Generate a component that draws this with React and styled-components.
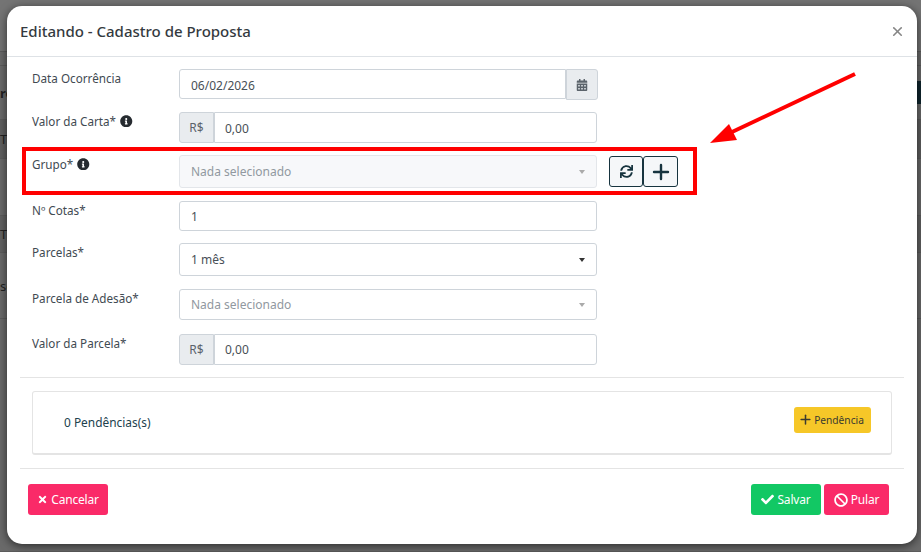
import React from 'react';
import styled, { createGlobalStyle } from 'styled-components';
import { FaBan, FaCalendarAlt, FaCheck, FaInfoCircle, FaSync, FaTimes } from 'react-icons/fa';
import { Plus, X } from 'lucide-react';

const GlobalStyle = createGlobalStyle`
    html, body {
        margin: 0;
        padding: 0;
        width: 921px;
        height: 552px;
        overflow: hidden;
        font-family: "Noto Sans", "Open Sans", sans-serif;
    }
    * {
        box-sizing: border-box;
    }
`;

const Page = styled.div`
    position: relative;
    width: 921px;
    height: 552px;
    overflow: hidden;
    background: #666;
    display: flex;
    flex-direction: column;
`;

const PageRow = styled.div`
    height: ${(p) => p.$h}px;
    background: ${(p) => p.$bg || '#6a6a6a'};
    border-bottom: 1px solid #5c5c5c;
    display: flex;
    align-items: center;
    justify-content: space-between;
    font-size: 13px;
    font-weight: ${(p) => (p.$bold ? 700 : 400)};
    color: #222;
    white-space: pre;
`;

const DarkEnd = styled.div`
    width: 10px;
    height: 23px;
    background: #10262e;
`;

const Modal = styled.div`
    position: absolute;
    left: 7px;
    top: 6px;
    width: 910px;
    height: 538px;
    background: #fff;
    border-radius: 15px;
    box-shadow: 0 2px 10px rgba(0, 0, 0, .6);
    display: flex;
    flex-direction: column;
    color: #3e4b55;
`;

const Header = styled.div`
    height: 51px;
    padding: 0 12px 0 13px;
    border-bottom: 1px solid #dee2e6;
    display: flex;
    align-items: center;
    justify-content: space-between;
`;

const Title = styled.h5`
    margin: 0;
    font-size: 15px;
    font-weight: 500;
    color: #343a40;
`;

const Close = styled.span`
    display: flex;
    color: #858585;
`;

const Body = styled.div`
    padding: 12px 25px 0;
`;

const Row = styled.div`
    height: ${(p) => p.$pitch}px;
    display: flex;
    align-items: flex-start;
`;

const Label = styled.label`
    width: 147px;
    font-size: 11.7px;
    line-height: 18px;
    display: flex;
    align-items: center;
    gap: 4px;
    color: #3f4a52;
    svg {
        font-size: 12.5px;
        color: #262b30;
    }
`;

const Field = styled.div`
    width: ${(p) => p.$w || 418}px;
    height: ${(p) => p.$h || 30}px;
    display: flex;
    align-items: center;
    justify-content: space-between;
    padding: ${(p) => p.$pt || 0}px 11px 0 ${(p) => p.$pl || 11}px;
    font-size: 12px;
    color: ${(p) => (p.$muted ? '#9198a0' : '#495057')};
    background: ${(p) => (p.$disabled ? '#f7f8fa' : '#fff')};
    border: 1px solid ${(p) => (p.$disabled ? '#e3e6ea' : '#ced4da')};
    border-radius: ${(p) => p.$radius || '3px'};
`;

const InputGroup = styled.div`
    display: flex;
`;

const Addon = styled.div`
    height: 31px;
    width: ${(p) => p.$w}px;
    display: flex;
    align-items: center;
    justify-content: center;
    font-size: 12px;
    color: #5b636b;
    background: #e9ecef;
    border: 1px solid #ced4da;
    border-radius: ${(p) => p.$radius};
`;

const Caret = styled.span`
    width: 0;
    height: 0;
    border-left: 3.5px solid transparent;
    border-right: 3.5px solid transparent;
    border-top: 4px solid ${(p) => p.$color};
`;

const IconButton = styled.button`
    width: ${(p) => p.$w}px;
    height: 31px;
    padding: 0;
    margin: 1px 0 0 ${(p) => p.$ml}px;
    display: flex;
    align-items: center;
    justify-content: center;
    font-size: 13px;
    color: #17343f;
    background: #f5f7f9;
    border: 1px solid #17343f;
    border-radius: 3px;
`;

const Divider = styled.div`
    height: 1px;
    background: #e4e4e4;
    margin: ${(p) => p.$margin};
`;

const Card = styled.div`
    height: 64px;
    margin: 0 25px;
    padding: 0 20px 2px 31px;
    border: 1px solid #e4e4e4;
    border-bottom-width: 2px;
    border-radius: 3px;
    display: flex;
    align-items: center;
    justify-content: space-between;
    font-size: 11.9px;
    color: #21414d;
`;

const Button = styled.button`
    height: 31px;
    width: ${(p) => p.$w}px;
    padding: 0;
    margin: ${(p) => p.$margin || 0};
    display: flex;
    align-items: center;
    justify-content: center;
    gap: 3px;
    font-family: inherit;
    font-size: 12px;
    letter-spacing: -.2px;
    color: #fff;
    background: ${(p) => p.$bg};
    border: 0;
    border-radius: 3px;
`;

const SmallButton = styled.button`
    width: 77px;
    height: 26px;
    padding: 0 3px 0 0;
    margin-bottom: 4px;
    display: flex;
    align-items: center;
    justify-content: center;
    gap: 1px;
    font-family: inherit;
    font-size: 10.2px;
    color: #3a3a30;
    background: #f6c728;
    border: 0;
    border-radius: 3px;
`;

const Footer = styled.div`
    padding: 0 28px 0 21px;
    display: flex;
    align-items: flex-start;
`;

const Spacer = styled.div`
    flex: 1;
`;

const Highlight = styled.div`
    position: absolute;
    left: 22px;
    top: 147px;
    width: 675px;
    height: 48px;
    border: 4px solid #ff0000;
    pointer-events: none;
`;

const Arrow = styled.svg`
    position: absolute;
    left: 700px;
    top: 65px;
`;

export default function App() {
    return (
        <Page>
            <GlobalStyle />
            <PageRow $h={52} $bg="#747474" />
            <PageRow $h={14} />
            <PageRow $h={54} $bold>ro<DarkEnd /></PageRow>
            <PageRow $h={39} $bg="#606060">TT</PageRow>
            <PageRow $h={57} />
            <PageRow $h={37} $bg="#626262">TT</PageRow>
            <PageRow $h={66}>so</PageRow>
            <PageRow $h={233} />

            <Modal>
                <Header>
                    <Title>Editando - Cadastro de Proposta</Title>
                    <Close><X size={15} strokeWidth={2.6} /></Close>
                </Header>
                <Body>
                    <Row $pitch={43}>
                        <Label>Data Ocorrência</Label>
                        <InputGroup>
                            <Field $w={387} $pt={2} $radius="3px 0 0 3px">06/02/2026</Field>
                            <Addon $w={32} $radius="0 3px 3px 0"><FaCalendarAlt /></Addon>
                        </InputGroup>
                    </Row>
                    <Row $pitch={43}>
                        <Label>Valor da Carta* <FaInfoCircle /></Label>
                        <InputGroup>
                            <Addon $w={35} $radius="3px 0 0 3px">R$</Addon>
                            <Field $w={383} $h={31} $pt={1} $pl={10} $radius="0 3px 3px 0">0,00</Field>
                        </InputGroup>
                    </Row>
                    <Row $pitch={46}>
                        <Label>Grupo* <FaInfoCircle /></Label>
                        <Field $h={33} $disabled $muted>Nada selecionado<Caret $color="#aaa" /></Field>
                        <IconButton $w={34} $ml={12}><FaSync /></IconButton>
                        <IconButton $w={35} $ml={0}><Plus size={24} strokeWidth={2.4} /></IconButton>
                    </Row>
                    <Row $pitch={42}>
                        <Label>Nº Cotas*</Label>
                        <Field>1</Field>
                    </Row>
                    <Row $pitch={46}>
                        <Label>Parcelas*</Label>
                        <Field $h={33}>1 mês<Caret $color="#333" /></Field>
                    </Row>
                    <Row $pitch={45}>
                        <Label>Parcela de Adesão*</Label>
                        <Field $h={31} $muted>Nada selecionado<Caret $color="#aaa" /></Field>
                    </Row>
                    <Row $pitch={31}>
                        <Label>Valor da Parcela*</Label>
                        <InputGroup>
                            <Addon $w={35} $radius="3px 0 0 3px">R$</Addon>
                            <Field $w={383} $h={31} $pl={10} $radius="0 3px 3px 0">0,00</Field>
                        </InputGroup>
                    </Row>
                </Body>
                <Divider $margin="12px 13px 13px" />
                <Card>
                    0 Pendências(s)
                    <SmallButton><Plus size={15} strokeWidth={2.4} /> Pendência</SmallButton>
                </Card>
                <Divider $margin="13px 13px 15px" />
                <Footer>
                    <Button $w={80} $bg="#fa2a68"><FaTimes size={11} /> Cancelar</Button>
                    <Spacer />
                    <Button $w={70} $bg="#12c864"><FaCheck size={13} /> Salvar</Button>
                    <Button $w={65} $bg="#fa2a68" $margin="0 0 0 3px"><FaBan size={14} /> Pular</Button>
                </Footer>
            </Modal>

            <Highlight />
            <Arrow width="170" height="85" viewBox="700 65 170 85">
                <line x1="855" y1="74" x2="732" y2="132" stroke="#ff0000" strokeWidth="4" />
                <polygon points="710,143 729,124 737,140" fill="#ff0000" />
            </Arrow>
        </Page>
    );
}
